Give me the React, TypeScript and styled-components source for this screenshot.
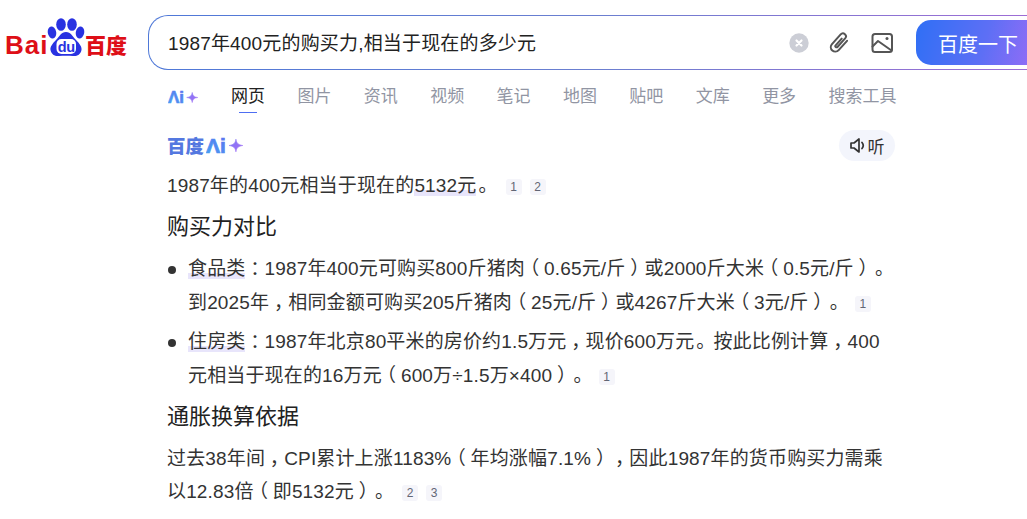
import React from "react";
import styled, { createGlobalStyle } from "styled-components";

const FONT = `"Liberation Sans", "Noto Sans CJK SC", sans-serif`;

const Global = createGlobalStyle`
  html, body { margin: 0; padding: 0; background: #fff; overflow: hidden; }
  body {
    width: 1027px;
    height: 519px;
    font-family: ${FONT};
    color: #222;
    text-spacing-trim: space-all;
    text-autospace: no-autospace;
  }
`;

const Page = styled.div`
  width: 1027px;
  height: 519px;
  overflow: hidden;
  display: flex;
  flex-direction: column;
`;

const Header = styled.header`
  display: flex;
  align-items: flex-start;
  padding: 15px 0 0 5px;
  gap: 21px;
  width: 1100px;
`;

const Logo = styled.div`
  width: 122px;
  height: 40px;
  flex: none;
  display: flex;
  align-items: flex-end;
  margin-top: 3px;
`;

const LogoWord = styled.span`
  font-family: "Liberation Sans", sans-serif;
  font-weight: 700;
  font-size: 26px;
  line-height: 25px;
  color: #de0f17;
  letter-spacing: 1px;
  width: 42px;
`;

const LogoCn = styled.span`
  font-family: "Noto Sans CJK SC", sans-serif;
  font-weight: 900;
  font-size: 21px;
  line-height: 25px;
  color: #de0f17;
  margin-bottom: 1px;
`;

const Paw = styled.svg`
  width: 38px;
  height: 39px;
  flex: none;
  margin: 0 0 1px 0;
`;

const SearchBox = styled.div`
  flex: none;
  width: 898px;
  height: 55px;
  box-sizing: border-box;
  border: 1px solid transparent;
  border-radius: 20px;
  background:
    linear-gradient(#fff, #fff) padding-box,
    linear-gradient(90deg, #4e78d8 0%, #6b7fd0 50%, #a06cd5 100%) border-box;
  display: flex;
  align-items: center;
  padding: 0 0 0 19px;
`;

const Query = styled.div`
  font-size: 19px;
  line-height: 26px;
  padding-top: 2px;
  letter-spacing: 0.17px;
  color: #222;
  flex: 1;
  white-space: nowrap;
`;

const Tools = styled.div`
  display: flex;
  align-items: center;
  flex: none;
`;

const ClearIcon = styled.svg`
  width: 20px;
  height: 20px;
  margin-right: 18px;
  display: block;
`;

const ToolIcon = styled.svg`
  width: 24px;
  height: 24px;
  display: block;
  margin-right: 19px;
  &:last-child {
    margin-right: 17px;
  }
`;

const SearchButton = styled.div`
  flex: none;
  width: 124px;
  height: 45px;
  margin-left: 5px;
  margin-right: 5px;
  border-radius: 15px;
  background: linear-gradient(105deg, #2f6ff5 0%, #5d6ff5 55%, #9a6cf6 100%);
  color: #fff;
  font-size: 20px;
  line-height: 51px;
  padding-left: 22px;
  box-sizing: border-box;
  white-space: nowrap;
`;

const Tabs = styled.nav`
  display: flex;
  align-items: flex-start;
  padding: 16px 0 0 168px;
  height: 44px;
  box-sizing: border-box;
  flex: none;
`;

const AiMark = styled.div`
  display: flex;
  align-items: center;
  width: 63px;
  height: 22px;
`;

const AiSvg = styled.svg<{ $w: number; $h: number }>`
  width: ${(p) => p.$w}px;
  height: ${(p) => p.$h}px;
  flex: none;
  display: block;
`;

const Tab = styled.a<{ $active?: boolean }>`
  position: relative;
  font-size: 17px;
  line-height: 22px;
  margin-right: 32.4px;
  white-space: nowrap;
  color: ${(p) => (p.$active ? "#222" : "#9195a3")};
  ${(p) =>
    p.$active &&
    `&::after {
      content: "";
      position: absolute;
      left: 8px;
      right: 8px;
      top: 26px;
      height: 1px;
      background: #4e6ef2;
    }`}
`;

const Answer = styled.main`
  width: 728px;
  margin-left: 167px;
  padding-top: 15px;
`;

const AnswerHead = styled.div`
  display: flex;
  align-items: center;
  justify-content: space-between;
  height: 32px;
`;

const Brand = styled.div`
  display: flex;
  align-items: center;
`;

const BrandCn = styled.span`
  font-family: "Noto Sans CJK SC", sans-serif;
  font-weight: 900;
  font-size: 18.5px;
  line-height: 22px;
  color: #5478e0;
  margin-right: 2px;
`;

const Listen = styled.div`
  display: flex;
  align-items: center;
  justify-content: center;
  gap: 3px;
  width: 56px;
  height: 31px;
  border-radius: 16px;
  background: #f3f5fc;
  font-size: 17px;
  color: #333;
`;

const SpeakerIcon = styled.svg`
  width: 15px;
  height: 17px;
  flex: none;
`;

const Para = styled.p<{ $top?: number }>`
  margin: ${(p) => p.$top ?? 0}px 0 0;
  font-size: 19px;
  line-height: 33px;
  letter-spacing: 0.15px;
  color: #333;
  white-space: nowrap;
`;

const Heading = styled.h3`
  margin: 6px 0 0;
  font-size: 22px;
  line-height: 38px;
  font-weight: 400;
  color: #222;
  white-space: nowrap;
`;

const BulletList = styled.ul`
  list-style: none;
  margin: 6px 0 -1px;
  padding: 0;
  display: flex;
  flex-direction: column;
  gap: 5px;
`;

const Bullet = styled.li`
  position: relative;
  padding-left: 21px;
  font-size: 19px;
  line-height: 34px;
  letter-spacing: 0.15px;
  color: #333;
  white-space: nowrap;
  &::before {
    content: "";
    position: absolute;
    left: 1px;
    top: 14px;
    width: 8px;
    height: 8px;
    border-radius: 50%;
    background: #333;
  }
`;

const Mark = styled.span`
  background: linear-gradient(transparent 70%, #e8e5fb 70%, #e8e5fb 100%);
`;

/* Full-width punctuation sits centred in its em box in the reference; the full stop sits a little left of centre. */
const Punct = styled.span<{ $stop?: boolean }>`
  display: inline-block;
  box-sizing: border-box;
  width: calc(1em + 0.15px);
  text-align: ${(p) => (p.$stop ? "left" : "center")};
  padding-left: ${(p) => (p.$stop ? "2px" : "0")};
  font-feature-settings: "halt";
  letter-spacing: 0;
`;

const Cite = styled.span`
  display: inline-block;
  width: 16px;
  height: 16px;
  margin-left: 8px;
  border-radius: 3px;
  background: #f5f5fa;
  color: #626675;
  font-size: 12px;
  line-height: 16px;
  letter-spacing: 0;
  text-align: center;
  vertical-align: 1px;
`;

const CiteGroup = styled.span`
  margin-left: 2px;
`;

const T = ({ children }: { children: string }) => (
  <>
    {children.split(/([，。：（）])/).map((part, i) =>
      /^[，。：（）]$/.test(part) ? (
        <Punct key={i} $stop={part === "。"}>
          {part}
        </Punct>
      ) : (
        part
      )
    )}
  </>
);

const AiLogo = ({ size, id }: { size: number; id: string }) => {
  const w = size * 1.75;
  const h = size;
  return (
    <AiSvg $w={w} $h={h} viewBox="0 0 35 20">
      <defs>
        <linearGradient id={`${id}-t`} x1="0" y1="1" x2="0.8" y2="0">
          <stop offset="0" stopColor="#45a5f2" />
          <stop offset="1" stopColor="#5b74f0" />
        </linearGradient>
        <linearGradient id={`${id}-s`} x1="0" y1="0" x2="1" y2="1">
          <stop offset="0" stopColor="#7f7af5" />
          <stop offset="1" stopColor="#a56cf5" />
        </linearGradient>
      </defs>
      <text x="0" y="17" fontFamily="'Liberation Sans', sans-serif" fontWeight="700" fontSize="20" fill={`url(#${id}-t)`} stroke={`url(#${id}-t)`} strokeWidth="0.7">
        Λi
      </text>
      <path d="M28.5 4 C29.1 7.5 30.5 9.4 35 10 C30.5 10.6 29.1 12.5 28.5 16 C27.9 12.5 26.5 10.6 22 10 C26.5 9.4 27.9 7.5 28.5 4Z" fill={`url(#${id}-s)`} stroke={`url(#${id}-s)`} strokeWidth="0.6" />
    </AiSvg>
  );
};

const tabs = ["图片", "资讯", "视频", "笔记", "地图", "贴吧", "文库", "更多", "搜索工具"];

export default function App() {
  return (
    <Page>
      <Global />
      <Header>
        <Logo>
          <LogoWord>Bai</LogoWord>
          <Paw viewBox="0 0 38 39">
            <g fill="#2932e1">
              <ellipse cx="5" cy="14.5" rx="4.2" ry="6" transform="rotate(-10 5 14.5)" />
              <ellipse cx="14" cy="6.5" rx="4.8" ry="6.3" />
              <ellipse cx="25" cy="6.5" rx="4.8" ry="6.3" />
              <ellipse cx="33" cy="14.5" rx="4.2" ry="6" transform="rotate(10 33 14.5)" />
              <path d="M19 14 C14 14 13 18 9 22 C5 26 3 29 3.5 32 C4.5 37 8.5 38.5 12 38 C16 37.5 22 37.5 26 38 C29.5 38.5 33.5 37 34.5 32 C35 29 33 26 29 22 C25 18 24 14 19 14Z" />
            </g>
            <rect x="9.5" y="21" width="19.5" height="15" rx="5" fill="#fff" />
            <text x="19.2" y="33.5" textAnchor="middle" fontFamily="'Liberation Sans', sans-serif" fontWeight="700" fontSize="14.5" fill="#2932e1" letterSpacing="-0.3">du</text>
          </Paw>
          <LogoCn>百度</LogoCn>
        </Logo>
        <SearchBox>
          <Query>1987年400元的购买力,相当于现在的多少元</Query>
          <Tools>
            <ClearIcon viewBox="0 0 20 20">
              <circle cx="10" cy="10" r="9.7" fill="#ccced6" />
              <path d="M7.5 7.5 L12.5 12.5 M12.5 7.5 L7.5 12.5" stroke="#fff" strokeWidth="2.2" strokeLinecap="round" />
            </ClearIcon>
            <ToolIcon viewBox="0 0 24 24" fill="none" stroke="#555" strokeWidth="2" strokeLinecap="round" strokeLinejoin="round">
              <path transform="rotate(42 12 12)" d="M16.5 5 V17.5 a4.5 4.5 0 0 1 -9 0 V4.5 a3 3 0 0 1 6 0 V16 a1.2 1.2 0 0 1 -2.4 0 V7" />
            </ToolIcon>
            <ToolIcon viewBox="0 0 24 24" fill="none" stroke="#555" strokeWidth="2" strokeLinejoin="round" strokeLinecap="round">
              <rect x="2.5" y="3" width="19.5" height="18" rx="2.5" />
              <path d="M2.5 15.5 L8 10 L21.5 19.5" />
              <circle cx="17" cy="7.5" r="1.5" fill="#555" stroke="none" />
            </ToolIcon>
          </Tools>
          <SearchButton>百度一下</SearchButton>
        </SearchBox>
      </Header>
      <Tabs>
        <AiMark>
          <AiLogo size={17} id="ai-tab" />
        </AiMark>
        <Tab $active>网页</Tab>
        {tabs.map((t) => (
          <Tab key={t}>{t}</Tab>
        ))}
      </Tabs>
      <Answer>
        <AnswerHead>
          <Brand>
            <BrandCn>百度</BrandCn>
            <AiLogo size={21} id="ai-brand" />
          </Brand>
          <Listen>
            <SpeakerIcon viewBox="0 0 15 17" fill="none" stroke="#333" strokeWidth="1.7" strokeLinejoin="round" strokeLinecap="round">
              <path d="M1 6 H4 L9 2 V15 L4 11 H1 Z" />
              <path d="M12 5.5 C13.5 7.3 13.5 9.7 12 11.5" />
            </SpeakerIcon>
            听
          </Listen>
        </AnswerHead>
        <Para $top={8}>
          1987年的400元相当于现在的<Mark>5132元</Mark>
          <T>。</T>
          <CiteGroup>
            <Cite>1</Cite>
            <Cite>2</Cite>
          </CiteGroup>
        </Para>
        <Heading>购买力对比</Heading>
        <BulletList>
          <Bullet>
            <Mark>食品类</Mark>
            <T>：1987年400元可购买800斤猪肉（0.65元/斤）或2000斤大米（0.5元/斤）。</T>
            <br />
            <T>到2025年，相同金额可购买205斤猪肉（25元/斤）或4267斤大米（3元/斤）。</T>
            <Cite>1</Cite>
          </Bullet>
          <Bullet>
            <Mark>住房类</Mark>
            <T>：1987年北京80平米的房价约1.5万元，现价600万元。按此比例计算，400</T>
            <br />
            <T>元相当于现在的16万元（600万÷1.5万×400）。</T>
            <Cite>1</Cite>
          </Bullet>
        </BulletList>
        <Heading>通胀换算依据</Heading>
        <Para $top={6}>
          <T>过去38年间，CPI累计上涨1183%（年均涨幅7.1%），因此1987年的货币购买力需乘</T>
          <br />
          <T>以12.83倍（即5132元）。</T>
          <CiteGroup>
            <Cite>2</Cite>
            <Cite>3</Cite>
          </CiteGroup>
        </Para>
      </Answer>
    </Page>
  );
}
